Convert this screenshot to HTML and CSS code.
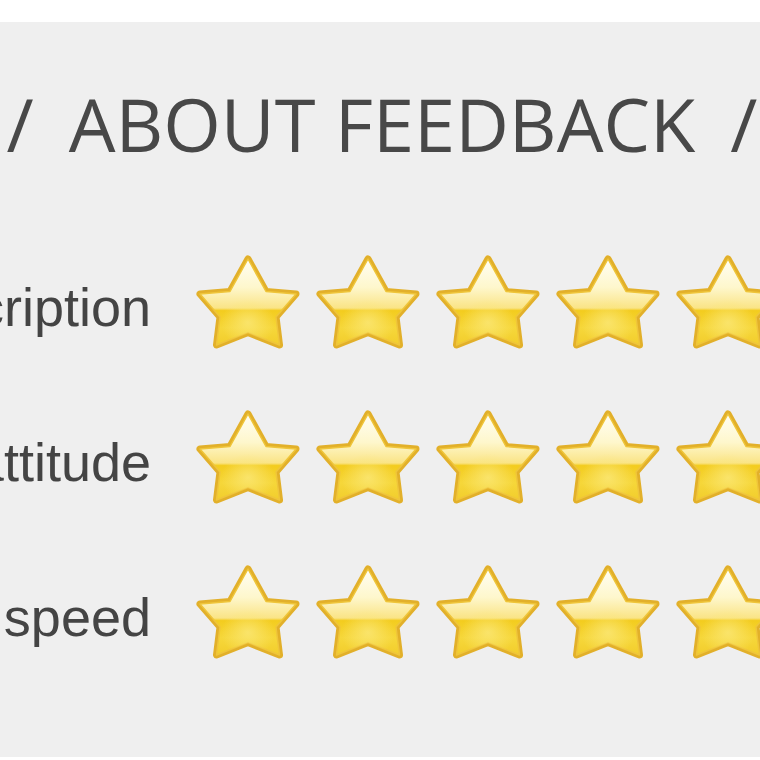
FILE: index.html
```html
<!DOCTYPE html>
<html lang="en">
<head>
<meta charset="utf-8">
<title>About Feedback</title>
<link rel="stylesheet" href="styles.css">
</head>
<body>
<svg class="defs" aria-hidden="true">
  <defs>
    <linearGradient id="starFill" x1="0" y1="0" x2="0" y2="1">
      <stop offset="0" stop-color="#fffef4"/>
      <stop offset="0.33" stop-color="#fef7cc"/>
      <stop offset="0.57" stop-color="#fae486"/>
      <stop offset="0.60" stop-color="#f3cc1e"/>
      <stop offset="0.80" stop-color="#f6d73a"/>
      <stop offset="1" stop-color="#f2cd2c"/>
    </linearGradient>
    <radialGradient id="starGlow" cx="0.5" cy="0.74" r="0.28">
      <stop offset="0" stop-color="#fbe878" stop-opacity="0.8"/>
      <stop offset="1" stop-color="#fbe878" stop-opacity="0"/>
    </radialGradient>
    <path id="starShape" d="M53 5 L71 37.5 L101 40 L81 63 L84.5 91 L53 78.5 L21.5 91 L25 63 L5 40 L35 37.5 Z"/>
    <symbol id="star" viewBox="0 0 106 96">
      <use href="#starShape" fill="#e2b02a" stroke="#e2b02a" stroke-width="7" stroke-linejoin="round"/>
      <use href="#starShape" fill="url(#starFill)" stroke="#efc53a" stroke-width="1.5" stroke-linejoin="round"/>
      <use href="#starShape" fill="url(#starGlow)"/>
    </symbol>
  </defs>
</svg>
<section class="panel">
  <h1 class="title"><span class="slash">/</span><span class="title-text">ABOUT FEEDBACK</span><span class="slash">/</span></h1>
  <div class="ratings">
    <div class="label"><span>Description</span></div>
    <div class="stars">
      <svg class="star"><use href="#star"/></svg>
      <svg class="star"><use href="#star"/></svg>
      <svg class="star"><use href="#star"/></svg>
      <svg class="star"><use href="#star"/></svg>
      <svg class="star"><use href="#star"/></svg>
    </div>
    <div class="label"><span>Service attitude</span></div>
    <div class="stars">
      <svg class="star"><use href="#star"/></svg>
      <svg class="star"><use href="#star"/></svg>
      <svg class="star"><use href="#star"/></svg>
      <svg class="star"><use href="#star"/></svg>
      <svg class="star"><use href="#star"/></svg>
    </div>
    <div class="label"><span>Delivery speed</span></div>
    <div class="stars">
      <svg class="star"><use href="#star"/></svg>
      <svg class="star"><use href="#star"/></svg>
      <svg class="star"><use href="#star"/></svg>
      <svg class="star"><use href="#star"/></svg>
      <svg class="star"><use href="#star"/></svg>
    </div>
  </div>
</section>
</body>
</html>
```
FILE: styles.css
```css
html, body {
  margin: 0;
  padding: 0;
  overflow: hidden;
  background: #ffffff;
}

body {
  width: 760px;
  height: 760px;
}

.defs {
  display: block;
  width: 0;
  height: 0;
  overflow: hidden;
}

.panel {
  margin-top: 22px;
  height: 735px;
  background: #efefef;
  padding-top: 65px;
  box-sizing: border-box;
}

.title {
  margin: 0;
  padding-left: 4px;
  display: flex;
  justify-content: center;
  gap: 35px;
  font-family: "Open Sans", "Liberation Sans", sans-serif;
  font-weight: 400;
  font-size: 74px;
  line-height: 74px;
  color: #484848;
  white-space: nowrap;
}

.ratings {
  margin-top: 93px;
  display: grid;
  grid-template-columns: 151px auto;
  column-gap: 44px;
  row-gap: 59px;
}

.label {
  display: flex;
  justify-content: flex-end;
  white-space: nowrap;
  font-family: "Liberation Sans", Arial, sans-serif;
  font-size: 54px;
  line-height: 96px;
  padding-top: 5px;
  height: 96px;
  box-sizing: border-box;
  color: #444444;
}

.label span {
  flex: none;
}

.stars {
  display: flex;
  gap: 14px;
  white-space: nowrap;
}

.star {
  flex: none;
  width: 106px;
  height: 96px;
}
```
